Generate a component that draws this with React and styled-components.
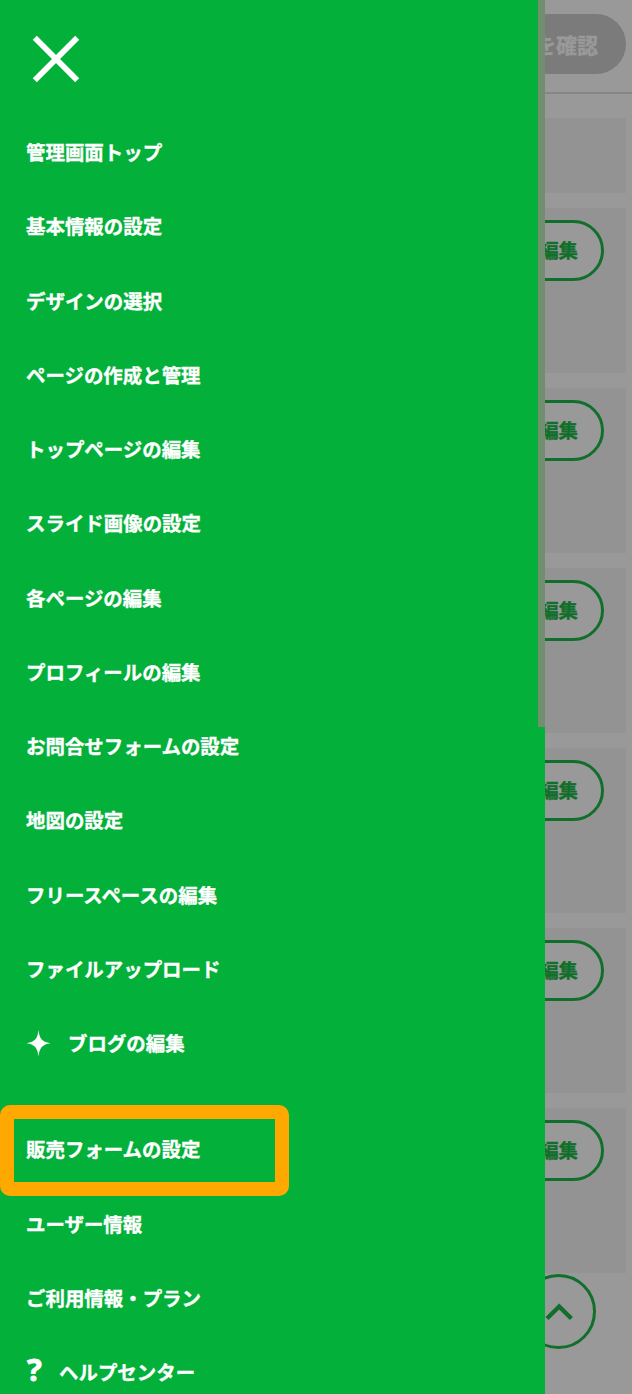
import React from 'react';
import styled, { createGlobalStyle } from 'styled-components';

const GlobalStyle = createGlobalStyle`
  *, *::before, *::after { box-sizing: border-box; }
  body {
    margin: 0;
    background: #fff;
    font-family: "Noto Sans CJK JP", "Liberation Sans", sans-serif;
    font-weight: 700;
    -webkit-text-stroke: 0.35px currentColor;
  }
`;

const Page = styled.div`
  position: relative;
  width: 632px;
  height: 1394px;
  overflow: hidden;
`;

const Header = styled.header`
  display: flex;
  justify-content: flex-end;
  height: 94px;
  padding: 14px 6px 0 0;
  border-bottom: 2px solid #e0e0e0;
`;

const PreviewButton = styled.button`
  width: 240px;
  height: 60px;
  padding: 0 28px 0 0;
  border: 0;
  border-radius: 30px;
  background: #cdcdcd;
  color: #fff;
  font: inherit;
  font-size: 21px;
  line-height: 59px;
  text-align: right;
`;

const CardList = styled.main`
  display: flex;
  flex-direction: column;
  gap: 15px;
  padding: 24px 6.5px 0 6.5px;
`;

const Card = styled.section`
  display: flex;
  justify-content: flex-end;
  height: ${(p) => (p.$compact ? 75 : 165)}px;
  padding: 12px 22px 0 0;
  background: #f5f5f5;
`;

const EditButton = styled.button`
  width: 110px;
  height: 60.5px;
  padding: 0 22.5px 0 0;
  border: 3px solid #1eb848;
  border-radius: 31px;
  background: #fff;
  color: #1eb848;
  font: inherit;
  font-size: 19.4px;
  line-height: 52px;
  text-align: right;
`;

const PageTopButton = styled.button`
  position: absolute;
  left: 521px;
  top: 1274px;
  display: flex;
  align-items: center;
  justify-content: center;
  width: 75px;
  height: 75px;
  padding: 0;
  border: 3px solid #1eb848;
  border-radius: 50%;
  background: #fff;
  color: #1eb848;
`;

const Overlay = styled.div`
  position: absolute;
  inset: 0;
  background: rgba(0, 0, 0, 0.4);
`;

const Drawer = styled.aside`
  position: absolute;
  inset: 0 auto 0 0;
  width: 545px;
  background: #03b03a;
  color: #fff;
`;

const ScrollThumb = styled.div`
  position: absolute;
  top: 0;
  right: 0;
  width: 7px;
  height: 727px;
  background: #728e70;
`;

const CloseButton = styled.button`
  display: block;
  margin: 35px 0 0 32px;
  padding: 0;
  border: 0;
  background: none;
  color: inherit;
  line-height: 0;
`;

const Menu = styled.nav`
  display: flex;
  flex-direction: column;
  padding-top: 32px;
`;

const MenuItem = styled.a`
  display: flex;
  align-items: center;
  gap: ${(p) => p.$gap || 0}px;
  flex: none;
  height: 74.25px;
  margin-top: ${(p) => (p.$separated ? 32 : 0)}px;
  padding-left: 26px;
  font-size: 19.45px;
  line-height: 28px;
  white-space: nowrap;
`;

const QuestionMark = styled.span`
  width: 17px;
  padding-bottom: 7px;
  font-family: "Noto Sans", sans-serif;
  font-size: 31px;
  line-height: 28px;
  text-indent: 1px;
  -webkit-text-stroke-width: 0.8px;
`;

const Highlight = styled.div`
  position: absolute;
  left: 0;
  top: 1105px;
  width: 289px;
  height: 91px;
  border-radius: 10px;
  border: 14px solid #ffa900;
`;

const CloseIcon = () => (
  <svg width="48" height="48" viewBox="0 0 48 48" fill="none" stroke="currentColor" strokeWidth="5.8">
    <path d="M2.8 2.8 45.2 45.2M45.2 2.8 2.8 45.2" />
  </svg>
);

const SparkleIcon = () => (
  <svg width="25" height="28" viewBox="0 0 25 28" fill="currentColor">
    <path d="M12.5 1C13.5 9 15.5 13 24.5 14.2C15.5 15.4 13.5 19.5 12.5 27.5C11.5 19.5 9.5 15.4 .5 14.2C9.5 13 11.5 9 12.5 1Z" />
  </svg>
);

const ChevronIcon = () => (
  <svg width="28" height="18" viewBox="0 0 28 18" fill="none" stroke="currentColor" strokeWidth="4.4">
    <path d="M2 15.5 14.2 3.5 26.4 15.5" />
  </svg>
);

const items = [
  { label: '管理画面トップ' },
  { label: '基本情報の設定' },
  { label: 'デザインの選択' },
  { label: 'ページの作成と管理' },
  { label: 'トップページの編集' },
  { label: 'スライド画像の設定' },
  { label: '各ページの編集' },
  { label: 'プロフィールの編集' },
  { label: 'お問合せフォームの設定' },
  { label: '地図の設定' },
  { label: 'フリースペースの編集' },
  { label: 'ファイルアップロード' },
  { label: 'ブログの編集', icon: <SparkleIcon />, gap: 17 },
  { label: '販売フォームの設定', separated: true },
  { label: 'ユーザー情報' },
  { label: 'ご利用情報・プラン' },
  { label: 'ヘルプセンター', icon: <QuestionMark>?</QuestionMark>, gap: 16 },
];

export default function App() {
  return (
    <Page>
      <GlobalStyle />
      <Header>
        <PreviewButton>を確認</PreviewButton>
      </Header>
      <CardList>
        <Card $compact />
        {[1, 2, 3, 4, 5, 6].map((n) => (
          <Card key={n}>
            <EditButton>編集</EditButton>
          </Card>
        ))}
      </CardList>
      <PageTopButton aria-label="ページトップ">
        <ChevronIcon />
      </PageTopButton>
      <Overlay />
      <Drawer>
        <CloseButton aria-label="閉じる">
          <CloseIcon />
        </CloseButton>
        <Menu>
          {items.map((item) => (
            <MenuItem key={item.label} $gap={item.gap} $separated={item.separated}>
              {item.icon}
              <span>{item.label}</span>
            </MenuItem>
          ))}
        </Menu>
        <ScrollThumb />
        <Highlight />
      </Drawer>
    </Page>
  );
}
